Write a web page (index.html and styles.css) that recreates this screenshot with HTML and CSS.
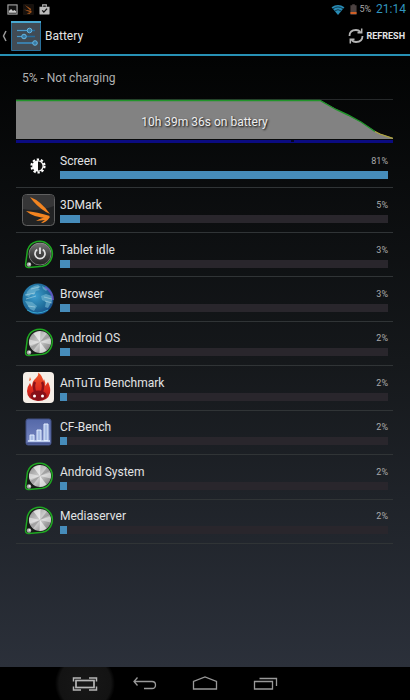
FILE: index.html
```html
<!DOCTYPE html>
<html lang="en">
<head>
<meta charset="utf-8">
<meta name="viewport" content="width=device-width, initial-scale=1">
<title>Battery</title>
<link rel="stylesheet" href="styles.css">
</head>
<body>
<svg class="defs" aria-hidden="true">
  <defs>
    <linearGradient id="metal" x1="0" y1="0" x2="1" y2="1">
      <stop offset="0" stop-color="#8b8b8b"/><stop offset=".3" stop-color="#b4b4b4"/><stop offset=".5" stop-color="#d2d2d2"/><stop offset=".7" stop-color="#a5a5a5"/><stop offset="1" stop-color="#777"/>
    </linearGradient>
    <linearGradient id="dark" x1="0" y1="0" x2="0" y2="1">
      <stop offset="0" stop-color="#777"/><stop offset=".5" stop-color="#454545"/><stop offset="1" stop-color="#222"/>
    </linearGradient>
    <radialGradient id="globe" cx=".4" cy=".4" r=".65">
      <stop offset="0" stop-color="#3e9fd0"/><stop offset=".6" stop-color="#22729f"/><stop offset="1" stop-color="#174f8c"/>
    </radialGradient>
    <linearGradient id="bench" x1="0" y1="0" x2="0" y2="1">
      <stop offset="0" stop-color="#5468a8"/><stop offset="1" stop-color="#7787c2"/>
    </linearGradient>
    <linearGradient id="flame" x1="0" y1="0" x2="0" y2="1">
      <stop offset="0" stop-color="#f0592a"/><stop offset=".6" stop-color="#dc2a1e"/><stop offset="1" stop-color="#a91416"/>
    </linearGradient>
    <symbol id="disc" viewBox="0 0 34 34">
      <path d="M4.600 26L6.500 12A12.700 12.700 0 1 1 21.500 28.300L8 29.600Q4.200 29.800 4.600 26Z" fill="#171a18" stroke="#1fa822" stroke-width="1.500"/>
      <circle cx="19" cy="16" r="11" fill="url(#metal)"/>
      <path d="M19 16L12.500 7.500Q16 5 19.500 5ZM19 16L25.500 24.500Q22 27 18.500 27Z" fill="#fff" opacity=".6"/>
      <path d="M19 16L29.500 12.500Q30.500 15 29.800 18.500ZM19 16L8.500 19.500Q7.500 17 8.200 13.500Z" fill="#fff" opacity=".45"/>
      <path d="M19 16L26 7.500L29 11ZM19 16L12 24.500L9 21Z" fill="#555" opacity=".35"/>
      <circle cx="8" cy="26.500" r="2.200" fill="#aaa"/><circle cx="8.500" cy="26" r="1" fill="#eee"/>
    </symbol>
  </defs>
</svg>

<div class="status">
  <svg class="status-icon" viewBox="0 0 12 12"><rect x="1" y="1" width="10" height="10" fill="#111" stroke="#aaa" stroke-width="1.200"/><path d="M2 9.500V7.500L4.500 5.500L6.500 7.500L8 6.500L10 8V9.500Z" fill="#ccc"/></svg>
  <svg class="status-icon" viewBox="0 0 12 12"><rect width="12" height="12" rx="1" fill="#17110d"/><path d="M2 1L9 5.500L8 7ZM1 6L10 7.500L8 9ZM4 10L10 8.500L7 11Z" fill="#a8571c"/></svg>
  <svg class="status-icon" viewBox="0 0 12 12"><path d="M4 3V1H8V3" fill="none" stroke="#bbb" stroke-width="1.200"/><path d="M.5 3H11.500V10.500Q11.500 11.500 10.500 11.500H1.500Q.5 11.500 .5 10.500Z" fill="#bbb"/><path d="M3.500 7L5.300 8.800L8.800 5" fill="none" stroke="#111" stroke-width="1.400"/></svg>
  <span class="spacer"></span>
  <svg class="wifi" viewBox="0 0 14 12"><path d="M0 3.500Q7-1.500 14 3.500L7 12Z" fill="#288bb5"/><path d="M1.500 5.300Q7 1.200 12.500 5.300M3.400 7.600Q7 4.800 10.600 7.600" fill="none" stroke="#07202c" stroke-width=".8"/></svg>
  <svg class="cell" viewBox="0 0 8 12"><path d="M2.500 0H5.500V1H7.500V12H.5V1H2.500Z" fill="#4c4241"/><rect x=".5" y="9" width="7" height="2" fill="#e46422"/></svg>
  <span class="level">5%</span>
  <time class="clock">21:14</time>
</div>

<header class="bar">
  <a class="up" href="#" aria-label="Navigate up">
    <svg class="chevron" viewBox="0 0 5 12"><path d="M4 1L1.500 6L4 11" fill="none" stroke="#999" stroke-width="1.500"/></svg>
    <svg class="settings" viewBox="0 0 30 30"><rect width="30" height="30" rx="1" fill="#2a709b"/><rect x="1" y="2" width="28" height="27" fill="#414b54"/><path d="M0 1H30" stroke="#48a9d2" stroke-width="2"/><path d="M6 9.500H24M6 15.500H24M6 22H24" stroke="#276c9b" stroke-width="1.600"/><path d="M6 9.500H17M6 15.500H11M6 22H22" stroke="#4a9acb" stroke-width="1"/><g fill="#397aa3" stroke="#65b7e3"><circle cx="18.500" cy="9.500" r="2.300"/><circle cx="13" cy="15.500" r="2.300"/><circle cx="24" cy="22" r="2.300"/></g></svg>
  </a>
  <h1 class="title">Battery</h1>
  <button class="refresh" type="button">
    <svg class="refresh-icon" viewBox="0 0 16 16"><path d="M1.500 8Q1.500 2 8 2Q10.500 2 12.500 4M14.500 8Q14.500 14 8 14Q5.500 14 3.500 12" fill="none" stroke="#b5b5b5" stroke-width="1.800"/><path d="M9.500 4.700H13.700V.5M6.500 11.300H2.300V15.500" fill="none" stroke="#b5b5b5" stroke-width="1.500"/></svg>
    REFRESH
  </button>
</header>

<main class="content">
  <p class="state">5% - Not charging</p>
  <section class="chart">
    <svg class="graph" viewBox="0 0 377 45" preserveAspectRatio="none">
      <path d="M0 .5H377" stroke="#26292a"/>
      <path d="M0 1H304L320 10L345 23L362 34L377 39V40H0Z" fill="#828282"/>
      <path d="M0 1.500H304L320 10.500L332 16L345 23L359 32.500" fill="none" stroke="#20952a" stroke-width="1.400"/>
      <path d="M359 32.500L364 35L377 39.500" fill="none" stroke="#b0a63b" stroke-width="1.200"/>
      <rect y="41" width="377" height="3" fill="#0b0b80"/>
      <rect x="275" y="41" width="3" height="2" fill="#060624"/>
    </svg>
    <span class="duration">10h 39m 36s on battery</span>
  </section>

  <ul class="list">
    <li class="row">
      <svg class="icon" viewBox="0 0 34 34"><circle cx="17" cy="17" r="6.500" fill="none" stroke="#fff" stroke-width="2.200" stroke-dasharray="2.300 1.784"/><circle cx="17" cy="17" r="5.800" fill="#fff"/><path d="M17 12.500A4.500 4.500 0 0 1 17 21.500Z" fill="#111"/></svg>
      <span class="name">Screen</span><span class="share">81%</span>
      <div class="track"><div class="fill" style="width:100%"></div></div>
    </li>
    <li class="row">
      <svg class="icon" viewBox="0 0 34 34"><rect x="1.500" y="1.500" width="32" height="31" rx="4" fill="#222324" stroke="#606060"/><path d="M2 16Q18 19 33 13V5Q33 2 30 2H5Q2 2 2 5Z" fill="#363637"/><path d="M9 4Q20 8 29 21L25 19Q15 13 9 4ZM5 18Q16 19 29 23L27 25Q13 25 5 18ZM15 28Q21 24 29 24Q25 30 20 30Q22 28 24 27Z" fill="#f38420"/></svg>
      <span class="name">3DMark</span><span class="share">5%</span>
      <div class="track"><div class="fill" style="width:6.2%"></div></div>
    </li>
    <li class="row">
      <svg class="icon" viewBox="0 0 34 34"><use href="#disc"/><circle cx="19" cy="16" r="11" fill="url(#dark)" stroke="#999" stroke-width=".5"/><path d="M16.200 11.500A5 5 0 1 0 21.800 11.500" fill="none" stroke="#e2e2e2" stroke-width="1.700"/><path d="M19 9.500V16" stroke="#e2e2e2" stroke-width="1.800"/></svg>
      <span class="name">Tablet idle</span><span class="share">3%</span>
      <div class="track"><div class="fill" style="width:3.2%"></div></div>
    </li>
    <li class="row">
      <svg class="icon" viewBox="0 0 34 34"><circle cx="17" cy="17" r="15.500" fill="url(#globe)"/><path d="M6 10Q10 4 17 3L20 5L17 6L19 8L15 9L13 13L10 12L8 15L5 14ZM21 4L27 7L25 9L22 7ZM20 14L25 12L31 14L31 19L27 26L24 25L25 20L21 18ZM4 19L11 20L16 24L13 29L9 27Z" fill="#73b7d3" opacity=".65"/><path d="M4 13L14 11M5 17L15 14M7 24L14 25M23 15L31 17M24 19L31 21M10 7L18 5" stroke="#b7dce6" stroke-width=".8" opacity=".7"/><path d="M24 5Q32 10 32 18" fill="none" stroke="#7952ce" stroke-width="2" opacity=".7"/><path d="M6 28Q16 34 27 28" fill="none" stroke="#40c6e7" opacity=".7"/></svg>
      <span class="name">Browser</span><span class="share">3%</span>
      <div class="track"><div class="fill" style="width:3.2%"></div></div>
    </li>
    <li class="row">
      <svg class="icon" viewBox="0 0 34 34"><use href="#disc"/></svg>
      <span class="name">Android OS</span><span class="share">2%</span>
      <div class="track"><div class="fill" style="width:3.2%"></div></div>
    </li>
    <li class="row">
      <svg class="icon" viewBox="0 0 34 34"><rect x="2" y="1" width="31" height="31" rx="4" fill="#f5eee7"/><path d="M17 30Q6 29 6 20Q6 16 9 12L11 16Q11 10 15 7Q18 4 17 1.500Q22 5 22 10L23 8Q25 12 24 15L27 11Q30 17 29 22Q27 30 17 30Z" fill="url(#flame)"/><path d="M14 11Q12 14 14 21M21 11Q23 14 21 21" fill="none" stroke="#8d1119" stroke-width="2.500"/><ellipse cx="17.500" cy="24.500" rx="8" ry="5" fill="#871018"/><circle cx="13.500" cy="25" r="1.500" fill="#fff"/><circle cx="21.500" cy="25" r="1.500" fill="#fff"/><path d="M8 10L9 6L10 9Z" fill="#ef5a2a"/></svg>
      <span class="name">AnTuTu Benchmark</span><span class="share">2%</span>
      <div class="track"><div class="fill" style="width:2.1%"></div></div>
    </li>
    <li class="row">
      <svg class="icon" viewBox="0 0 34 34"><rect x="5" y="4" width="25" height="26" rx="2" fill="url(#bench)" stroke="#404e82"/><path d="M7 26H29" stroke="#d4e3fa" stroke-width="1.500"/><path d="M9 20H13V25.500H9ZM16 15H20V25.500H16ZM23 9H27V25.500H23Z" fill="#a9bde5" stroke="#e2edff"/><path d="M6 28.500H29" stroke="#46558e" stroke-width="2"/></svg>
      <span class="name">CF-Bench</span><span class="share">2%</span>
      <div class="track"><div class="fill" style="width:2.1%"></div></div>
    </li>
    <li class="row">
      <svg class="icon" viewBox="0 0 34 34"><use href="#disc"/></svg>
      <span class="name">Android System</span><span class="share">2%</span>
      <div class="track"><div class="fill" style="width:2.1%"></div></div>
    </li>
    <li class="row">
      <svg class="icon" viewBox="0 0 34 34"><use href="#disc"/></svg>
      <span class="name">Mediaserver</span><span class="share">2%</span>
      <div class="track"><div class="fill" style="width:2.1%"></div></div>
    </li>
  </ul>
</main>

<nav class="nav">
  <button class="key pressed" type="button" aria-label="Screenshot"><svg class="key-icon" viewBox="0 0 26 16"><path d="M1.500 5.500V2H9M17 2H24.500V5.500M24.500 10.500V14H17M9 14H1.500V10.500" fill="none" stroke="#b5b5b5" stroke-width="1.500"/><rect x="4" y="4.500" width="18" height="7" fill="none" stroke="#b5b5b5" stroke-width="1.700"/></svg></button>
  <button class="key" type="button" aria-label="Back"><svg class="key-icon" viewBox="0 0 26 16"><path d="M5.500 1.500L2 5.500L5.500 9.500M2 5.500H20Q23.500 5.500 23.500 9T20 12.500H12" fill="none" stroke="#999" stroke-width="1.300"/></svg></button>
  <button class="key" type="button" aria-label="Home"><svg class="key-icon" viewBox="0 0 26 16"><path d="M1.500 13V5.500L13 1L24.500 5.500V13Z" fill="none" stroke="#999" stroke-width="1.300"/></svg></button>
  <button class="key" type="button" aria-label="Recent apps"><svg class="key-icon" viewBox="0 0 26 16"><path d="M2.500 5.500H20.500V13H2.500ZM7.500 2.500H24.500V10" fill="none" stroke="#999" stroke-width="1.300"/></svg></button>
</nav>
</body>
</html>
```
FILE: styles.css
```css
* {
  box-sizing: border-box;
}

body {
  display: flex;
  flex-direction: column;
  min-height: 100vh;
  margin: 0;
  background: #000;
  color: #e2e3e4;
  font: 12px/16px Roboto, "Liberation Sans", sans-serif;
}

button {
  padding: 0;
  border: 0;
  background: none;
  color: inherit;
  font: inherit;
}

svg {
  display: block;
}

.defs {
  position: absolute;
  width: 0;
  height: 0;
}

.status {
  display: flex;
  align-items: center;
  gap: 5px;
  height: 18px;
  padding: 0 4px 0 7px;
}

.status-icon {
  width: 11px;
  height: 11px;
}

.spacer {
  flex: 1;
}

.wifi {
  width: 14px;
  height: 11px;
}

.cell {
  width: 7px;
  height: 11px;
}

.level {
  margin-left: -3px;
  color: #aaa;
  font-size: 9px;
}

.clock {
  color: #3195bf;
  font-size: 12px;
}

.bar {
  display: flex;
  align-items: center;
  height: 38px;
  padding: 0 5px 0 2px;
  border-bottom: 2px solid #2790b4;
}

.up {
  display: flex;
  align-items: center;
  gap: 4px;
}

.chevron {
  width: 5px;
  height: 12px;
}

.settings {
  width: 30px;
  height: 30px;
}

.title {
  flex: 1;
  margin: 0 0 0 4px;
  font-size: 12px;
  font-weight: 400;
}

.refresh {
  display: flex;
  align-items: center;
  gap: 3px;
  color: #e2e3e4;
  font-size: 9px;
  font-weight: 700;
}

.refresh-icon {
  width: 16px;
  height: 16px;
}

.content {
  flex: 1;
  padding: 14px 17px 16px 16px;
  background: linear-gradient(#020303, #15181b 50%, #2b303a);
}

.state {
  margin: 0 0 13px 6px;
  color: #b0b1b1;
}

.chart {
  display: grid;
  place-items: center;
}

.graph,
.duration {
  grid-area: 1 / 1;
}

.graph {
  width: 100%;
  height: 45px;
}

.duration {
  color: #eee;
  text-shadow: 1px 1px 2px #000;
}

.list {
  display: grid;
  grid-auto-rows: 1fr;
  min-height: 400px;
  margin: 0;
  padding: 0;
  list-style: none;
}

.row {
  display: grid;
  grid-template-columns: 34px 1fr auto;
  grid-template-rows: 16px 8px;
  align-content: center;
  align-items: center;
  gap: 2px 5px;
  padding: 0 5px;
  border-bottom: 1px solid #303436;
}

.icon {
  grid-row: 1 / 3;
  width: 34px;
  height: 34px;
}

.share {
  color: #a9aaab;
  font-size: 9px;
}

.track {
  grid-column: 2 / 4;
  height: 8px;
  background: #29262c;
}

.fill {
  height: 100%;
  background: #468cba;
}

.nav {
  display: flex;
  height: 33px;
  padding: 0 115px 0 55px;
}

.key {
  display: flex;
  flex: 1;
  align-items: center;
  justify-content: center;
}

.pressed {
  background: radial-gradient(circle at center, #171717 0, #131313 26px, transparent 30px);
}

.key-icon {
  width: 26px;
  height: 16px;
}
```
